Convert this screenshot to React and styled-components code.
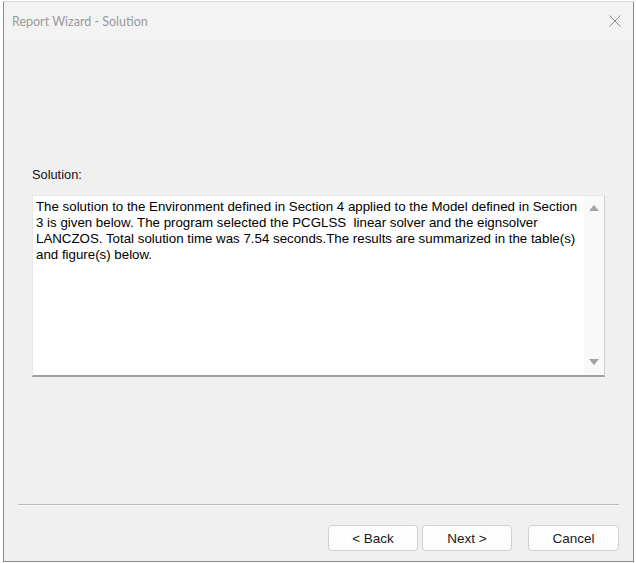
import React from "react";
import styled, { createGlobalStyle } from "styled-components";

const Global = createGlobalStyle`
  html, body { margin: 0; padding: 0; background: #ffffff; }
  #root { width: 636px; height: 563px; }
`;

const Window = styled.div`
  box-sizing: border-box;
  margin: 1px 0 0 3px;
  width: 631px;
  height: 561px;
  border: 1px solid #8a8a8a;
  border-top-color: #d8d8d8;
  background: #f0f0f0;
  display: flex;
  flex-direction: column;
`;

const TitleBar = styled.div`
  height: 38px;
  flex: none;
  display: flex;
  align-items: center;
  justify-content: space-between;
  padding: 0 12px 0 8px;
  background: #f3f3f3;
  font-family: Lato, "Open Sans", sans-serif;
  font-size: 12.5px;
  color: #9a9a9a;
`;

const Body = styled.div`
  flex: 1;
  display: flex;
  flex-direction: column;
  padding: 0 14px 0 14px;
  font-family: "Liberation Sans", Arial, sans-serif;
  font-size: 13.3px;
  color: #000;
`;

const Label = styled.div`
  margin: 127px 0 0 14px;
  line-height: 16px;
  font-size: 12.8px;
  color: #111;
`;

const TextBox = styled.div`
  box-sizing: border-box;
  margin: 12px 14px 0 14px;
  height: 182px;
  display: flex;
  background: #ffffff;
  border-top: 1px solid #e6e6e6;
  border-left: 1px solid #e6e6e6;
  border-right: 1px solid #d0d0d0;
  border-bottom: 2px solid #a0a0a0;
`;

const TextArea = styled.div`
  flex: 1;
  padding: 3px 3px;
  line-height: 16px;
  white-space: pre;
  overflow: hidden;
`;

const ScrollBar = styled.div`
  width: 20px;
  flex: none;
  background: #f8f8f8;
  display: flex;
  flex-direction: column;
  justify-content: space-between;
  align-items: center;
  padding: 9px 0 10px;
`;

const Separator = styled.div`
  margin: 127px 0 0 0;
  height: 1px;
  background: #b9b9b9;
  border-bottom: 1px solid #f9f9f9;
`;

const ButtonRow = styled.div`
  display: flex;
  justify-content: flex-end;
  margin-top: 19px;
`;

const Button = styled.button`
  box-sizing: border-box;
  width: ${(p) => p.w || 90}px;
  height: 26px;
  margin-left: ${(p) => p.gap || 0}px;
  background: #fdfdfd;
  border: 1px solid #d0d0d0;
  border-radius: 4px;
  font-family: "Liberation Sans", Arial, sans-serif;
  font-size: 13.5px;
  color: #1a1a1a;
  padding: 0;
`;

const Arrow = ({ down }) => (
  <svg width="10" height="6" viewBox="0 0 10 6">
    <path d={down ? "M0 0 L10 0 L5 6 Z" : "M0 6 L10 6 L5 0 Z"} fill="#a3a3a3" />
  </svg>
);

const text = `The solution to the Environment defined in Section 4 applied to the Model defined in Section
3 is given below. The program selected the PCGLSS  linear solver and the eignsolver
LANCZOS. Total solution time was 7.54 seconds.The results are summarized in the table(s)
and figure(s) below.`;

export default function App() {
  return (
    <>
      <Global />
      <Window>
        <TitleBar>
          <span>Report Wizard - Solution</span>
          <svg width="12" height="12" viewBox="0 0 12 12">
            <path d="M0.5 0.5 L11.5 11.5 M11.5 0.5 L0.5 11.5" stroke="#8a8a8a" strokeWidth="1" />
          </svg>
        </TitleBar>
        <Body>
          <Label>Solution:</Label>
          <TextBox>
            <TextArea>{text}</TextArea>
            <ScrollBar>
              <Arrow />
              <Arrow down />
            </ScrollBar>
          </TextBox>
          <Separator />
          <ButtonRow>
            <Button w={90}>&lt; Back</Button>
            <Button w={90} gap={4}>Next &gt;</Button>
            <Button w={91} gap={16}>Cancel</Button>
          </ButtonRow>
        </Body>
      </Window>
    </>
  );
}
